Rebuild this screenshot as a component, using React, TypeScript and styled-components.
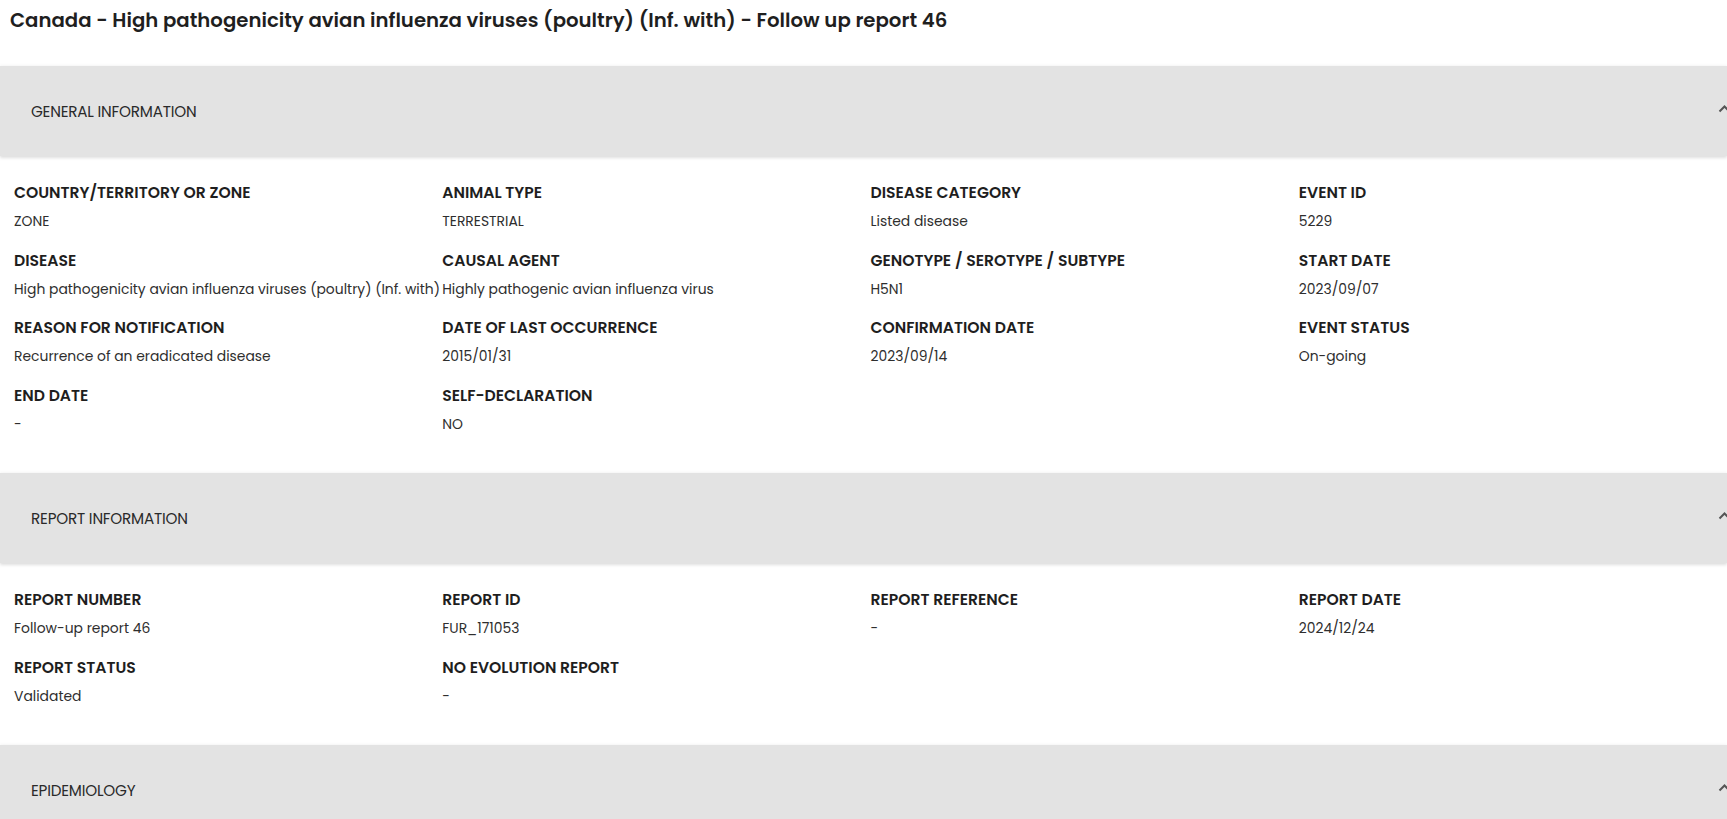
import React from "react";
import styled, { createGlobalStyle } from "styled-components";

const GlobalStyle = createGlobalStyle`
  html, body {
    margin: 0;
    padding: 0;
    background: #ffffff;
    overflow-x: hidden;
  }
  body {
    font-family: Poppins, Inter, "Noto Sans", sans-serif;
    color: #222222;
  }
`;

const Page = styled.main`
  display: flex;
  flex-direction: column;
  width: 100%;
  overflow: hidden;
`;

const Title = styled.h1`
  margin: 0;
  padding: 5px 10px 31px;
  font-size: 19.7px;
  line-height: 30px;
  font-weight: 600;
  color: #1f1f1f;
  white-space: nowrap;
`;

const Panel = styled.section`
  display: flex;
  flex-direction: column;
`;

const PanelHeader = styled.header`
  display: flex;
  align-items: center;
  justify-content: space-between;
  height: 90px;
  padding-left: 31px;
  background: #e3e3e3;
  box-shadow: 0 2px 3px rgba(0, 0, 0, 0.13), 0 -1px 3px rgba(0, 0, 0, 0.04);
  position: relative;
  z-index: 1;
`;

const PanelTitle = styled.span`
  font-size: 15.2px;
  font-weight: 400;
  color: #2a2a2a;
  letter-spacing: -0.2px;
`;

const Chevron = styled.svg`
  width: 13px;
  height: 9px;
  margin-right: -4px;
  margin-top: -5px;
  flex-shrink: 0;
`;

const PanelBody = styled.div`
  display: grid;
  grid-template-columns: repeat(4, 1fr);
  row-gap: 15.5px;
  padding: 25px 0 37.5px 14px;
`;

const Field = styled.div`
  display: flex;
  flex-direction: column;
  gap: 5px;
  min-width: 0;
`;

const Label = styled.div`
  font-size: 15.6px;
  line-height: 24px;
  font-weight: 600;
  color: #1e1e1e;
  white-space: nowrap;
`;

const Value = styled.div`
  font-size: 13.9px;
  line-height: 23px;
  font-weight: 400;
  color: #2e2e2e;
  white-space: nowrap;
`;

type Item = [string, string];

const general: Item[] = [
  ["COUNTRY/TERRITORY OR ZONE", "ZONE"],
  ["ANIMAL TYPE", "TERRESTRIAL"],
  ["DISEASE CATEGORY", "Listed disease"],
  ["EVENT ID", "5229"],
  ["DISEASE", "High pathogenicity avian influenza viruses (poultry) (Inf. with)"],
  ["CAUSAL AGENT", "Highly pathogenic avian influenza virus"],
  ["GENOTYPE / SEROTYPE / SUBTYPE", "H5N1"],
  ["START DATE", "2023/09/07"],
  ["REASON FOR NOTIFICATION", "Recurrence of an eradicated disease"],
  ["DATE OF LAST OCCURRENCE", "2015/01/31"],
  ["CONFIRMATION DATE", "2023/09/14"],
  ["EVENT STATUS", "On-going"],
  ["END DATE", "-"],
  ["SELF-DECLARATION", "NO"],
];

const report: Item[] = [
  ["REPORT NUMBER", "Follow-up report 46"],
  ["REPORT ID", "FUR_171053"],
  ["REPORT REFERENCE", "-"],
  ["REPORT DATE", "2024/12/24"],
  ["REPORT STATUS", "Validated"],
  ["NO EVOLUTION REPORT", "-"],
];

const ChevronUp = () => (
  <Chevron viewBox="0 0 13 9" aria-hidden="true">
    <path d="M1.5 7.5 L6.5 2.5 L11.5 7.5" fill="none" stroke="#555555" strokeWidth="2" />
  </Chevron>
);

const Section = ({ title, items }: { title: string; items?: Item[] }) => (
  <Panel>
    <PanelHeader>
      <PanelTitle>{title}</PanelTitle>
      <ChevronUp />
    </PanelHeader>
    {items && (
      <PanelBody>
        {items.map(([label, value]) => (
          <Field key={label}>
            <Label>{label}</Label>
            <Value>{value}</Value>
          </Field>
        ))}
      </PanelBody>
    )}
  </Panel>
);

export default function App() {
  return (
    <Page>
      <GlobalStyle />
      <Title>
        Canada - High pathogenicity avian influenza viruses (poultry) (Inf. with) - Follow up report 46
      </Title>
      <Section title="GENERAL INFORMATION" items={general} />
      <Section title="REPORT INFORMATION" items={report} />
      <Section title="EPIDEMIOLOGY" />
    </Page>
  );
}
